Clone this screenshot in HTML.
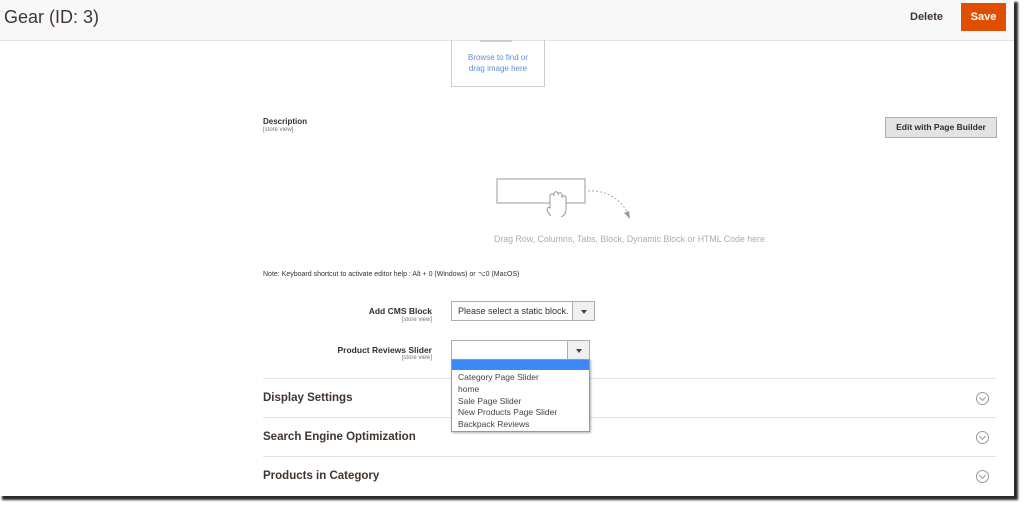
<!DOCTYPE html><html><head><style>
body{margin:0;width:1024px;height:507px;background:#fff;position:relative;overflow:hidden;font-family:"Liberation Sans",sans-serif;color:#303030}
.pg{position:absolute;left:0;top:0;width:1014px;height:496px;background:#fff;box-shadow:3px 3px 2px 1px #2a2a2a;overflow:hidden}
.hdr{position:absolute;left:0;top:0;width:1014px;height:40px;background:#f8f8f8;border-bottom:1px solid #e3e3e3}
.a{position:absolute;white-space:nowrap}
.sel{position:absolute;border:1px solid #adadad;background:#fff;font-size:9px;color:#333}
.arr{position:absolute;right:0;top:0;bottom:0;width:21px;border-left:1px solid #adadad;background:#f0f0f0}
.arr:after{content:"";position:absolute;left:8px;top:8px;border:3px solid transparent;border-top:4px solid #444}
.line{position:absolute;left:263px;width:733px;height:1px;background:#e3e3e3}
.sec{position:absolute;left:263px;font-size:11.5px;font-weight:bold;color:#41362f}
.chev{position:absolute;left:976px;width:11px;height:11px;border:1px solid #999;border-radius:50%}
.chev:after{content:"";position:absolute;left:3px;top:2px;width:4px;height:4px;border-right:1px solid #999;border-bottom:1px solid #999;transform:rotate(45deg)}
</style></head><body><div class="pg">
<div class="hdr"></div>
<div class="a" style="left:4px;top:7px;font-size:18px;color:#41362f">Gear (ID: 3)</div>
<div class="a" style="left:910px;top:11px;font-size:11px;font-weight:bold;color:#41362f">Delete</div>
<div class="a" style="left:961px;top:3px;width:45px;height:28px;background:#e04f00;color:#fff;font-size:11px;font-weight:bold;text-align:center;line-height:28px">Save</div>
<div class="a" style="left:451px;top:40px;width:92px;height:46px;border:1px solid #ccc;border-top:none"></div>
<div class="a" style="left:480px;top:40px;width:32px;height:2px;background:#ccc"></div>
<div class="a" style="left:451px;top:52px;width:94px;text-align:center;font-size:8px;line-height:11px;color:#5e8fd6">Browse to find or<br>drag image here</div>
<div class="a" style="left:263px;top:117px;font-size:8px;font-weight:bold">Description</div>
<div class="a" style="left:263px;top:127px;font-size:6px;color:#777">[store view]</div>
<div class="a" style="left:885px;top:117px;width:110px;height:19px;background:#e3e3e3;border:1px solid #adadad;font-size:8.5px;font-weight:bold;text-align:center;line-height:19px">Edit with Page Builder</div>
<svg class="a" style="left:495px;top:178px" width="140" height="44"><rect x="2" y="1" width="88" height="24" fill="none" stroke="#aaa" stroke-width="1.2"/><path d="M56 38 C50 32 52 28 55 30 L55 18 C55 15 59 15 59 18 L59 16 C59 13 63 13 63 16 L63 17 C63 14 67 14 67 17 L67 20 C67 17 71 17 71 20 L71 32 C71 36 68 38 66 39" fill="#fff" stroke="#999" stroke-width="1"/><path d="M93 13 C110 12 125 20 132 34" fill="none" stroke="#aaa" stroke-dasharray="2 2"/><path d="M129 35 L135 41 L134 33Z" fill="#999"/></svg>
<div class="a" style="left:494px;top:234px;font-size:8.8px;color:#adadad">Drag Row, Columns, Tabs, Block, Dynamic Block or HTML Code here</div>
<div class="a" style="left:263px;top:270px;font-size:7px;color:#333">Note: Keyboard shortcut to activate editor help : Alt + 0 (Windows) or ⌥0 (MacOS)</div>
<div class="a" style="right:582px;top:306px;font-size:8.5px;font-weight:bold;text-align:right">Add CMS Block</div>
<div class="a" style="right:582px;top:317px;font-size:6px;color:#777">[store view]</div>
<div class="sel" style="left:451px;top:301px;width:142px;height:18px"><span style="position:absolute;left:6px;top:4px">Please select a static block.</span><div class="arr"></div></div>
<div class="a" style="right:582px;top:345px;font-size:8.5px;font-weight:bold">Product Reviews Slider</div>
<div class="a" style="right:582px;top:355px;font-size:6px;color:#777">[store view]</div>
<div class="sel" style="left:451px;top:340px;width:137px;height:18px"><div class="arr"></div></div>
<div class="line" style="top:378px"></div>
<div class="sec" style="top:392px">Display Settings</div>
<div class="chev" style="top:392px"></div>
<div class="line" style="top:417px"></div>
<div class="sec" style="top:431px">Search Engine Optimization</div>
<div class="chev" style="top:431px"></div>
<div class="line" style="top:456px"></div>
<div class="sec" style="top:470px">Products in Category</div>
<div class="chev" style="top:470px"></div>
<div class="a" style="left:451px;top:359px;width:137px;height:71px;background:#fff;border:1px solid #999;box-shadow:1px 1px 2px rgba(0,0,0,.3);font-size:8.5px;line-height:11.8px;color:#444">
<div style="height:10px;background:#3d8af7"></div>
<div style="padding-left:6px;padding-top:2px">Category Page Slider<br>home<br>Sale Page Slider<br>New Products Page Slider<br>Backpack Reviews</div></div>
</div></body></html>
